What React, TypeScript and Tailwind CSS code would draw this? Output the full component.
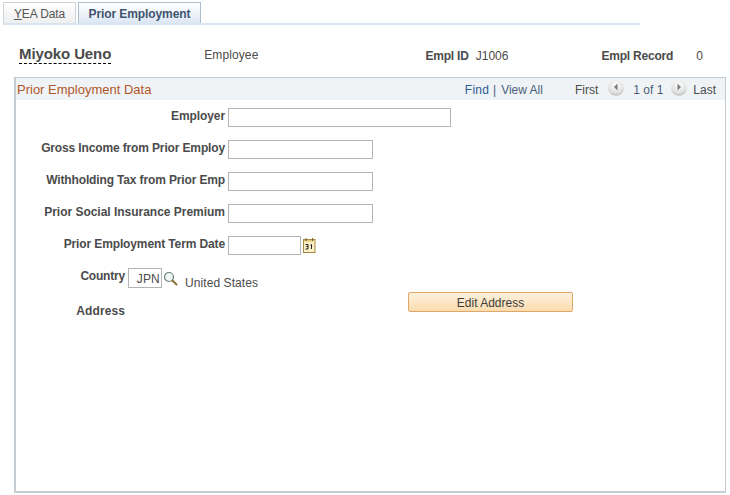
const sans = "font-['Liberation_Sans',Arial,sans-serif]";

function CircleArrow({ dir }: { dir: "left" | "right" }) {
  const id = `grad-${dir}`;
  return (
    <svg width="16" height="16" viewBox="0 0 16 16" className="shrink-0">
      <defs>
        <radialGradient id={id} cx="50%" cy="30%" r="75%">
          <stop offset="0%" stopColor="#ffffff" />
          <stop offset="65%" stopColor="#e2e2e2" />
          <stop offset="100%" stopColor="#b4b4b4" />
        </radialGradient>
      </defs>
      <circle cx="8" cy="8" r="7.8" fill={`url(#${id})`} />
      {dir === "left" ? (
        <path d="M9.500 3.500v7L6 7z" fill="#7a7a7a" />
      ) : (
        <path d="M6.500 3.500v7L10 7z" fill="#7a7a7a" />
      )}
    </svg>
  );
}

function Magnifier() {
  return (
    <svg width="15" height="15" viewBox="0 0 15 15" className="shrink-0">
      <circle cx="6" cy="6" r="4.500" fill="#f1f6f7" stroke="#64807c" strokeWidth="1.200" />
      <path d="M9.500 9.500l4 4" stroke="#8f7136" strokeWidth="2" strokeLinecap="round" />
    </svg>
  );
}

function CalendarIcon() {
  return (
    <svg width="13" height="15" viewBox="0 0 13 15" className="shrink-0">
      <rect x="0.500" y="1.500" width="11.500" height="13" fill="#fbf0c4" stroke="#a58a45" />
      <rect x="1" y="2" width="10.500" height="1.500" fill="#e0c677" />
      <path d="M3 0v3M9.500 0v3" stroke="#7a6428" strokeWidth="1" />
      <path d="M2.500 6.500h2.500v2H3.500h1.500v2.500H2.500M7.500 7l1-.5V11" fill="none" stroke="#222222" strokeWidth="1" />
    </svg>
  );
}

function FormRow({ label, inputWidth, tracking }: { label: string; inputWidth: string; tracking: string }) {
  return (
    <div className="flex h-[19px] items-start">
      <label className={`w-[209px] pt-[1px] text-right text-[12px] font-bold leading-[15px] text-[#4b4b4b] whitespace-nowrap ${tracking}`}>
        {label}
      </label>
      <input className={`ml-[3px] h-[19px] border border-[#b4b4b4] bg-white ${inputWidth}`} />
    </div>
  );
}

export default function App() {
  return (
    <div className={`${sans} h-[495px] w-[730px] overflow-hidden bg-white text-[12px] text-[#4b4b4b]`}>
      {/* tabs */}
      <div className="ml-[3px] mt-[2px] flex w-[637px] items-end gap-[2px] border-b-[2px] border-[#d9e4f1]">
        <div className="flex h-[21px] w-[73px] items-center justify-center border border-b-0 border-[#cdd3d9] bg-gradient-to-b from-white to-[#efefef] text-[12px] text-[#555555]">
          <span className="pt-[1px] tracking-[-0.1px]"><span className="underline">Y</span>EA Data</span>
        </div>
        <div className="flex h-[21px] w-[123px] items-center justify-center border border-b-0 border-[#aebdd0] bg-gradient-to-b from-white to-[#dce7f4] text-[12px] font-bold text-[#3f5570]">
          <span className="pt-[1px] tracking-[-0.1px]">Prior Employment</span>
        </div>
      </div>

      {/* employee header */}
      <div className="ml-[19px] mt-[20px] flex h-[20px] items-start">
        <span className="border-b border-dashed border-black pb-[1px] text-[15px] font-bold leading-[17px] tracking-[-0.1px] text-[#4b4b4b]">
          Miyoko Ueno
        </span>
        <span className="ml-[93px] mt-[3px] leading-[14px] tracking-[0.1px]">Employee</span>
        <span className="ml-[167px] mt-[4px] font-bold leading-[14px] tracking-[-0.2px]">Empl ID</span>
        <span className="ml-[7px] mt-[4px] leading-[14px]">J1006</span>
        <span className="ml-[93px] mt-[4px] font-bold leading-[14px] tracking-[-0.2px]">Empl Record</span>
        <span className="ml-[23px] mt-[4px] leading-[14px]">0</span>
      </div>

      {/* panel */}
      <div className="ml-[14px] mt-[12px] h-[416px] w-[712px] border border-l-[2px] border-b-[2px] border-[#c5cdd3]">
        <div className="flex h-[22px] items-center bg-[#eff3f5] pl-[1px] pr-[9px]">
          <span className="pt-[1px] text-[13px] text-[#b0562a]">Prior Employment Data</span>
          <span className="ml-auto pt-[1px] tracking-[0.2px] text-[#2d5a92]">Find</span>
          <span className="ml-[4px] pt-[1px] text-[#4b5f7a]">|</span>
          <span className="ml-[5px] pt-[1px] text-[#4b5f7a]">View All</span>
          <span className="ml-[32px] pt-[1px]">First</span>
          <span className="ml-[10px] -mt-[2px]"><CircleArrow dir="left" /></span>
          <span className="ml-[9px] pt-[1px] text-[#4b5f7a]">1 of 1</span>
          <span className="ml-[8px] -mt-[2px]"><CircleArrow dir="right" /></span>
          <span className="ml-[6px] pt-[1px]">Last</span>
        </div>

        <div className="mt-[8px] flex flex-col gap-[13px]">
          <FormRow label="Employer" inputWidth="w-[223px]" tracking="tracking-[-0.08px]" />
          <FormRow label="Gross Income from Prior Employ" inputWidth="w-[145px]" tracking="tracking-[-0.14px]" />
          <FormRow label="Withholding Tax from Prior Emp" inputWidth="w-[145px]" tracking="tracking-[-0.14px]" />
          <FormRow label="Prior Social Insurance Premium" inputWidth="w-[145px]" tracking="tracking-[-0.02px]" />
          <div className="flex h-[19px] items-start">
            <label className="w-[209px] pt-[1px] text-right font-bold leading-[15px] tracking-[-0.12px]">Prior Employment Term Date</label>
            <input className="ml-[3px] h-[19px] w-[73px] border border-[#b4b4b4] bg-white" />
            <span className="ml-[2px] mt-[2px]"><CalendarIcon /></span>
          </div>
        </div>

        <div className="mt-[13px] flex h-[20px] items-start">
          <label className="w-[109px] pt-[1px] text-right font-bold leading-[15px] tracking-[-0.2px]">Country</label>
          <div className="ml-[3px] flex h-[20px] w-[34px] items-center justify-end border border-[#b4b4b4] pr-[1px] pt-[1px] leading-none tracking-[0.2px]">
            JPN
          </div>
          <span className="ml-[1px] mt-[3px]"><Magnifier /></span>
          <span className="ml-[7px] mt-[8px] leading-[15px] tracking-[0.08px]">United States</span>
        </div>

        <div className="mt-[4px] flex items-start">
          <label className="mt-[12px] w-[109px] text-right font-bold leading-[15px] tracking-[0.1px]">Address</label>
          <button className="ml-[283px] h-[20px] w-[165px] rounded-[2px] border border-[#dfa76a] bg-gradient-to-b from-[#fdf1dc] to-[#fbdcae] pt-[1px] text-[12px] text-[#3d3d3d]">
            Edit Address
          </button>
        </div>
      </div>
    </div>
  );
}
